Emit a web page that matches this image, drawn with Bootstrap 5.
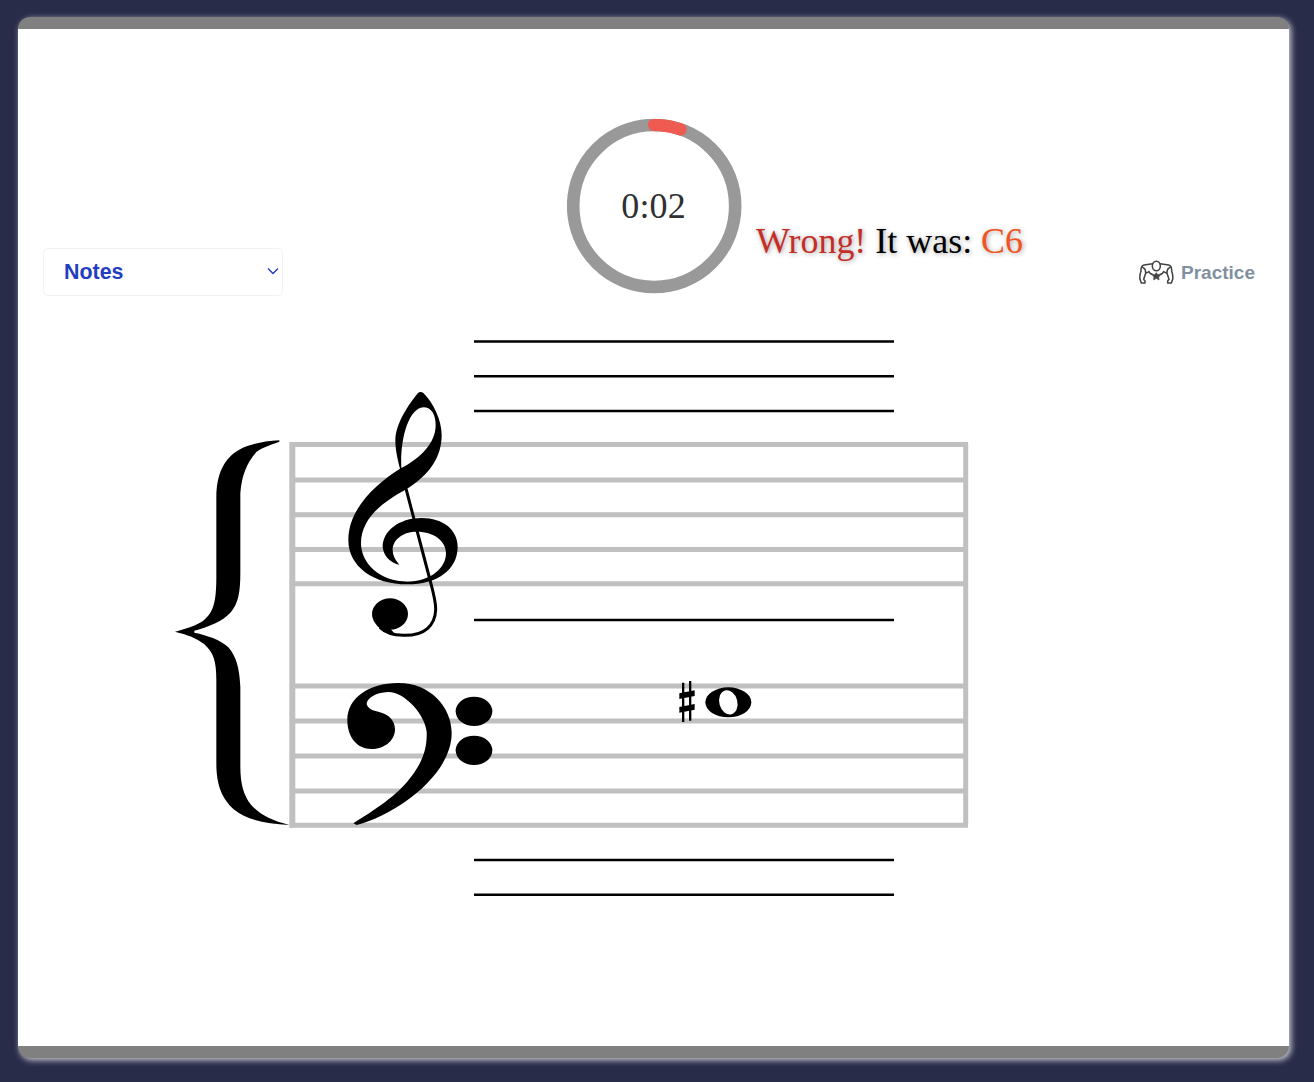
<!DOCTYPE html>
<html lang="en">
<head>
<meta charset="utf-8">
<meta name="viewport" content="width=device-width, initial-scale=1">
<title>Note practice</title>
<link href="https://cdn.jsdelivr.net/npm/bootstrap@5.3.0/dist/css/bootstrap.min.css" rel="stylesheet">
<style>
body{background:#282c48;height:1082px;padding:17px 25px 24px 18px;overflow:hidden}
.stage{height:1041px;border:solid #808080;border-width:12px 0;border-radius:12px;box-shadow:2px 2px 6px #d0d0d8}
.topbar{height:301px;padding:90px 34px 0 25px}
.mode-select{width:240px;height:48px;margin-top:129px;padding:0 3px 2px 20px;border:1px solid #f2f2f2;border-radius:5px;color:#233dc0;font:bold 21.4px "Liberation Sans",Arial,sans-serif}
.mode-select span{padding-top:2px}
.timer{width:175px;height:175px;margin-left:284px}
.timer text{font:36px "Liberation Serif",serif;fill:#303030}
.verdict{margin:99px 0 0 14px;font:35.95px/46px "Liberation Serif",serif;color:#000;text-shadow:1px 1px 5px rgba(0,0,0,.38);white-space:nowrap}
.wrong-text{color:#c52e28}.note-name{color:#f15423}
.practice{margin-top:139px;height:30px;color:#8190a1;font:bold 19px "Liberation Sans",Arial,sans-serif;gap:7px}
.score{display:block;margin-left:147px}
</style>
<script src="https://cdn.jsdelivr.net/npm/bootstrap@5.3.0/dist/js/bootstrap.bundle.min.js"></script>
</head>
<body>
<main class="stage bg-white">
<header class="topbar d-flex align-items-start">
  <button class="mode-select bg-white d-flex align-items-center justify-content-between flex-shrink-0" type="button">
    <span>Notes</span>
    <svg width="12" height="8" viewBox="0 0 12 8" fill="none" stroke="#233dc0" stroke-width="1.4"><path d="M1 1.5 6 6.5 11 1.5"/></svg>
  </button>
  <svg class="timer flex-shrink-0" viewBox="0 0 175 175">
    <circle cx="87.2" cy="87" r="81" fill="none" stroke="#999" stroke-width="12.6"/>
    <path d="M87.2 6A81 81 0 0 1 113.5 10.4" fill="none" stroke="#ef5b50" stroke-width="12.4" stroke-linecap="round"/>
    <text x="86.5" y="99" text-anchor="middle" textLength="64.5">0:02</text>
  </svg>
  <div class="verdict"><span class="wrong-text">Wrong!</span> It was: <span class="note-name">C6</span></div>
  <div class="practice ms-auto d-flex align-items-center">
    <svg width="35" height="28" viewBox="56 40 105 84" fill="none" stroke="#444" stroke-width="4.6" stroke-linejoin="round" stroke-linecap="round">
      <path d="M97 54Q84 56 71 58Q61 61 62 76Q57 90 59 101L63 112H74V106L70 101L76 83L86 78Q89 84 94 86M119 54Q132 56 145 58Q155 61 154 76Q159 90 157 101L153 112H142V106L146 101L140 83L130 78Q127 84 122 86M68 66Q77 70 76 83M148 66Q139 70 140 83"/>
      <ellipse cx="108" cy="61" rx="12" ry="14.5"/>
      <path d="M92 84 103 87 108 81 113 87 124 84 115 94 116 103 108 98 100 103 101 94Z" fill="#444" stroke-width="2"/>
    </svg>
    <span>Practice</span>
  </div>
</header>
<svg class="score" width="815" height="575" viewBox="165 330 815 575">
  <g fill="none" stroke="#c0c0c0" stroke-width="5">
    <path d="M290 444.5H968M290 480H966M290 514.7H966M290 549.5H966M290 583.8H966M290 686H966M290 721H966M290 756H966M290 791H966M290 825.3H968M965.7 444V825"/>
    <path d="M292.3 442V827.8" stroke-width="6"/>
  </g>
  <path d="M474 341.5H894M474 376.2H894M474 411H894M474 620H894M474 860H894M474 894.8H894" stroke="#000" stroke-width="2.4"/>
  <g transform="translate(165 430) scale(.33333)">
    <path d="M343 31C270 36 219 50 188 88C164 118 154 155 154 205V440C154 520 144 546 118 569C96 587 60 597 30 605C66 614 96 624 118 643C146 668 154 695 154 750V1000C154 1068 172 1106 206 1138C244 1170 300 1180 373 1185C318 1172 282 1152 258 1124C236 1097 226 1060 226 1010V770C223 713 214 680 190 652C168 630 128 616 88 608V602C132 590 172 574 196 548C220 522 226 486 226 430V190C230 135 246 98 274 66C290 53 318 44 343 35Z"/>
  </g>
  <g transform="translate(330 380) scale(.33333)">
    <path fill-rule="evenodd" d="M264 39C235 75 197 130 196 180C196 215 205 245 210 266C140 310 55 385 55 480C55 560 130 613 232 613C320 613 383 570 383 500C383 450 340 414 275 414C205 414 158 455 158 500C160 530 185 550 208 554C195 540 188 525 188 510C188 478 220 455 260 455C315 455 348 485 348 520C348 565 300 605 232 605C150 605 93 550 93 490C93 420 150 370 225 330C300 285 335 230 335 165C335 120 310 70 281 40Q272 32 264 39ZM214 264C210 180 235 85 280 82C305 82 317 105 317 135C317 190 270 235 214 264Z"/>
    <path d="M228 326 300 600C312 645 318 665 317 690C315 735 285 768 220 766C190 765 165 757 150 742" fill="none" stroke="#000" stroke-width="9"/>
    <path d="M130 720Q150 760 200 768L180 745Z"/>
    <ellipse cx="180" cy="702" rx="54" ry="47"/>
  </g>
  <g transform="translate(330 670) scale(.33333)">
    <path d="M70 460C160 405 210 365 240 325C275 280 292 240 290 185C285 135 225 66 175 66C135 68 110 85 110 103C115 118 130 122 145 125C180 133 196 155 195 180C193 215 160 237 125 237C80 237 52 200 52 150C52 85 115 39 205 39C300 39 365 110 365 190C365 310 210 430 80 465Z"/>
    <ellipse cx="432" cy="124" rx="55" ry="44"/><ellipse cx="432" cy="241" rx="55" ry="44"/>
  </g>
  <g transform="translate(665 670) scale(.33333)">
    <path d="M51 38H58V156H51ZM72 33H79V152H72ZM43 70 89 61V78L43 87ZM43 111 89 102V119L43 128Z"/>
    <ellipse cx="190" cy="97" rx="69" ry="45"/>
    <ellipse cx="190" cy="97" rx="27" ry="37" transform="rotate(-15 190 97)" fill="#fff"/>
  </g>
</svg>
</main>
</body>
</html>
